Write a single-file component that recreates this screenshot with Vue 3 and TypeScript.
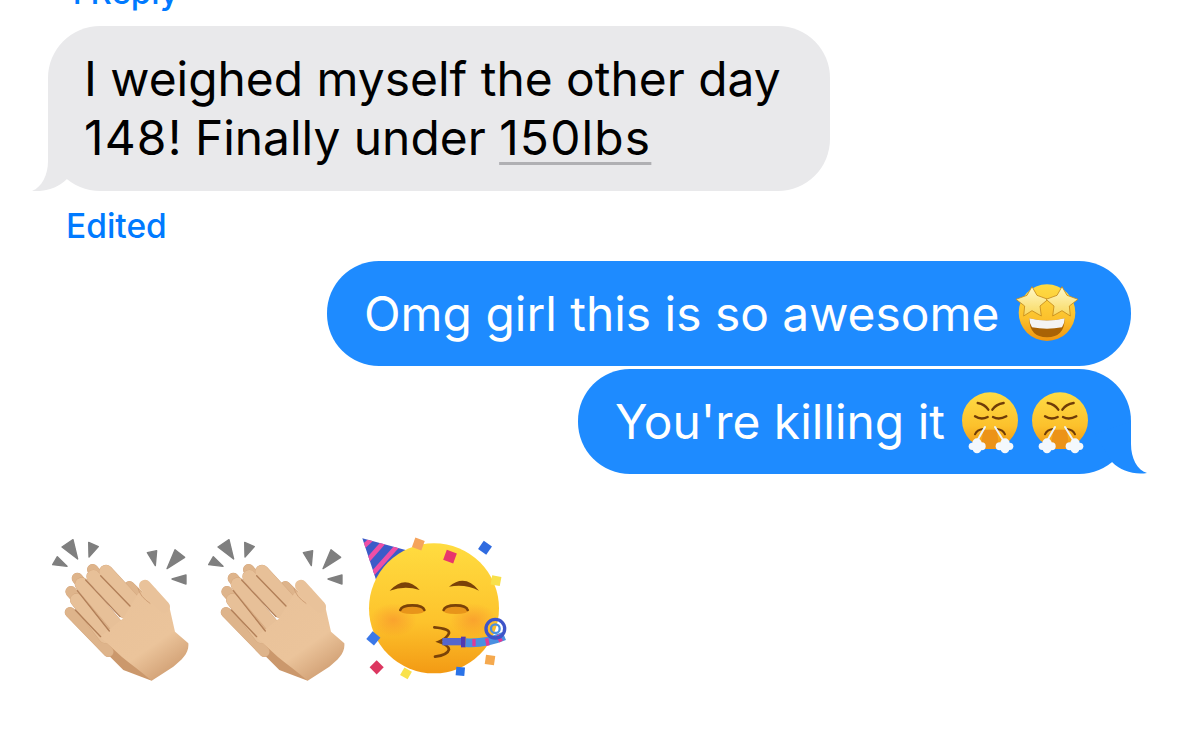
<script setup lang="ts">
interface Bit { x: number; y: number; s: number; r: number; c: string }
interface Finger { x1: number; y1: number; x2: number; y2: number; w: number }

const confetti: Bit[] = [
  { x: 190, y: 42, s: 30, r: 20, c: '#f5a45c' },
  { x: 285, y: 80, s: 32, r: 20, c: '#e8366c' },
  { x: 390, y: 53, s: 30, r: 35, c: '#2f6be0' },
  { x: 423, y: 152, s: 28, r: 10, c: '#f8e04a' },
  { x: 55, y: 325, s: 30, r: 40, c: '#3b78e8' },
  { x: 65, y: 412, s: 30, r: 45, c: '#dc3760' },
  { x: 153, y: 430, s: 26, r: 30, c: '#f9e24c' },
  { x: 316, y: 424, s: 26, r: 5, c: '#2a73e8' },
  { x: 405, y: 390, s: 28, r: 8, c: '#f5a94e' }
]
const backFingers: Finger[] = [
  { x1: 90, y1: 262, x2: 205, y2: 380, w: 30 },
  { x1: 93, y1: 200, x2: 205, y2: 325, w: 32 },
  { x1: 112, y1: 160, x2: 225, y2: 295, w: 32 },
  { x1: 158, y1: 134, x2: 245, y2: 240, w: 32 },
  { x1: 268, y1: 184, x2: 320, y2: 235, w: 30 }
]
const frontFingers: Finger[] = [
  { x1: 110, y1: 225, x2: 195, y2: 335, w: 38 },
  { x1: 125, y1: 178, x2: 225, y2: 297, w: 40 },
  { x1: 160, y1: 155, x2: 255, y2: 260, w: 40 },
  { x1: 198, y1: 140, x2: 288, y2: 238, w: 40 }
]
</script>

<template>
  <main class="page">
    <div class="reply">1 Reply</div>

    <div class="bubble grey">
      <span>I weighed myself the other day<br /><span class="num">148</span>! Finally under <span class="link num">150lbs</span></span>
      <svg class="tail tail-left" width="60" height="60" viewBox="0 0 60 60">
        <path d="M16 8V30C16 44 10 56 0 60C13 61 26 57 35 48L52 20Z" fill="#e9e9eb" />
      </svg>
    </div>
    <div class="edited">Edited</div>

    <div class="bubble blue first">
      <span>Omg girl this is so awesome</span>
      <svg class="emoji star" viewBox="0 0 210 198" width="70" height="66">
        <defs>
          <linearGradient id="face" x1="0" y1="0" x2="0" y2="1">
            <stop offset="0" stop-color="#fedc45" />
            <stop offset=".6" stop-color="#fcc12c" />
            <stop offset="1" stop-color="#f09410" />
          </linearGradient>
          <linearGradient id="starfill" x1="0" y1="0" x2="0" y2="1">
            <stop offset="0" stop-color="#fff8c8" />
            <stop offset="1" stop-color="#f8d85e" />
          </linearGradient>
        </defs>
        <circle cx="105" cy="98" r="85" fill="url(#face)" />
        <path d="M52 115Q105 128 158 115Q158 172 105 172Q52 172 52 115Z" fill="#a96205" />
        <path d="M52 115Q105 128 158 115Q158 130 150 142Q105 150 60 142Q52 130 52 115Z" fill="#f4f4f4" />
        <path d="M60 20L75 46L108 58L84 78L88 108L60 92L35 108L38 78L12 58L45 46Z" fill="url(#starfill)" stroke="#c48a1c" stroke-width="2.5" stroke-linejoin="round" />
        <path d="M150 20L135 46L102 58L126 78L122 108L150 92L175 108L172 78L198 58L165 46Z" fill="url(#starfill)" stroke="#c48a1c" stroke-width="2.5" stroke-linejoin="round" />
      </svg>
    </div>

    <div class="bubble blue second">
      <span>You're killing it</span>
      <svg v-for="n in 2" :key="n" class="emoji huff" viewBox="0 0 225 210" width="75" height="70">
        <circle cx="105" cy="100" r="84" fill="url(#face)" />
        <path d="M84 128H126L132 186H78Z" fill="#ec9318" />
        <g fill="none" stroke="#6f3c08" stroke-linecap="round">
          <path d="M68 48Q90 52 100 68" stroke-width="7" />
          <path d="M146 48Q122 52 112 68" stroke-width="7" />
          <path d="M60 88Q78 100 98 90" stroke-width="7" />
          <path d="M114 90Q132 100 154 88" stroke-width="7" />
          <path d="M60 142Q66 128 84 126" stroke-width="6" />
          <path d="M150 142Q144 128 126 126" stroke-width="6" />
        </g>
        <path d="M90 120L66 162" stroke="#eef3f8" stroke-width="6" stroke-linecap="round" />
        <path d="M120 120L146 162" stroke="#eef3f8" stroke-width="6" stroke-linecap="round" />
        <g fill="#f4f8fc">
          <circle cx="52" cy="178" r="11" /><circle cx="66" cy="168" r="14" /><circle cx="80" cy="178" r="12" /><circle cx="66" cy="186" r="13" />
          <circle cx="134" cy="178" r="12" /><circle cx="150" cy="168" r="14" /><circle cx="164" cy="178" r="11" /><circle cx="150" cy="186" r="13" />
        </g>
      </svg>
      <svg class="tail tail-right" width="60" height="60" viewBox="0 0 60 60">
        <path d="M44 8V30C44 44 50 56 60 59C47 61 34 57 25 48L8 20Z" fill="#1e8bff" />
      </svg>
    </div>

    <div class="emoji-row">
      <svg v-for="n in 2" :key="n" class="emoji clap" viewBox="0 0 480 495" width="160" height="165">
        <defs>
          <linearGradient id="palm" x1="0.2" y1="0.1" x2="0.8" y2="1">
            <stop offset="0" stop-color="#e9c29a" />
            <stop offset=".6" stop-color="#ebc49b" />
            <stop offset="1" stop-color="#cd9a6e" />
          </linearGradient>
        </defs>
        <g fill="#7f7f7f" stroke="#7f7f7f" stroke-width="4" stroke-linejoin="round">
          <path d="M38 119L81 124L52 95Z" /><path d="M66 66L99 44L113 102Z" /><path d="M146 52L175 65L147 96Z" />
          <path d="M322 83L350 77L346 122Z" /><path d="M381 131L405 74L434 97Z" /><path d="M396 162L438 150L438 177Z" />
        </g>
        <path d="M100 285L250 435L335 467L310 400L200 300Z" fill="#cb986c" />
        <g stroke-linecap="round">
          <line v-for="(f, i) in backFingers" :key="'bo' + i" :x1="f.x1" :y1="f.y1" :x2="f.x2" :y2="f.y2" :stroke-width="f.w + 2" stroke="#d3a57c" />
          <line v-for="(f, i) in backFingers" :key="'b' + i" :x1="f.x1" :y1="f.y1" :x2="f.x2" :y2="f.y2" :stroke-width="f.w" stroke="#deb48b" />
          <line v-for="(f, i) in frontFingers" :key="'fo' + i" :x1="f.x1" :y1="f.y1" :x2="f.x2" :y2="f.y2" :stroke-width="f.w + 2" stroke="#d3a57c" />
          <line v-for="(f, i) in frontFingers" :key="'f' + i" :x1="f.x1" :y1="f.y1" :x2="f.x2" :y2="f.y2" :stroke-width="f.w" stroke="#e7c098" />
        </g>
        <path d="M295 205L345 190L388 245L405 320L445 355C448 385 425 405 400 425L335 467C305 440 275 420 245 395L180 335L250 280Z" fill="url(#palm)" />
        <line x1="315" y1="182" x2="372" y2="245" stroke="#e9c29a" stroke-width="36" stroke-linecap="round" />
        <path d="M294 190Q300 215 330 235" fill="none" stroke="#cf9f76" stroke-width="3" stroke-linecap="round" />
        <g fill="none" stroke="#b27f58" stroke-width="4" stroke-linecap="round">
          <path d="M182 152L270 243" />
          <path d="M137 165L240 275" />
          <path d="M112 197L208 318" />
          <path d="M106 255L182 335" />
        </g>
      </svg>
      <svg class="emoji party" viewBox="0 0 480 465" width="160" height="155">
        <defs>
          <linearGradient id="pface" x1="0" y1="0" x2="0" y2="1">
            <stop offset="0" stop-color="#ffdc40" />
            <stop offset=".6" stop-color="#fdc32c" />
            <stop offset="1" stop-color="#f39a14" />
          </linearGradient>
          <radialGradient id="blush">
            <stop offset="0" stop-color="#f5722e" stop-opacity=".4" />
            <stop offset="1" stop-color="#f5722e" stop-opacity="0" />
          </radialGradient>
          <clipPath id="hat"><path d="M22 25L160 62L70 170Z" /></clipPath>
        </defs>
        <path d="M22 25L160 62L70 170Z" fill="#3c5bc8" />
        <g clip-path="url(#hat)" stroke="#ee4fa6" stroke-width="14" fill="none">
          <path d="M20 55L52 25" /><path d="M30 100L90 32" /><path d="M45 140L125 50" />
        </g>
        <circle cx="237" cy="235" r="195" fill="url(#pface)" />
        <ellipse cx="115" cy="270" rx="70" ry="50" fill="url(#blush)" />
        <ellipse cx="355" cy="270" rx="70" ry="50" fill="url(#blush)" />
        <g fill="#7a4208">
          <path d="M104 182Q150 132 194 180Q150 166 104 182Z" />
          <path d="M282 170Q330 130 372 182Q330 160 282 170Z" />
        </g>
        <path d="M134 240Q134 224 172 224Q210 224 210 240Q210 252 172 252Q134 252 134 240Z" fill="#e8951a" />
        <path d="M264 240Q264 224 302 224Q340 224 340 240Q340 252 302 252Q264 252 264 240Z" fill="#e8951a" />
        <g fill="none" stroke="#7a4208" stroke-linecap="round">
          <path d="M136 240Q140 226 172 226Q204 226 208 240" stroke-width="8" />
          <path d="M266 240Q270 226 302 226Q334 226 338 240" stroke-width="8" />
          <path d="M238 292Q285 296 282 310Q276 325 252 335Q280 345 282 358Q278 375 240 380" stroke-width="8" />
        </g>
        <path d="M262 335H325" stroke="#5566cc" stroke-width="22" />
        <path d="M325 320V352" stroke="#5138b0" stroke-width="14" />
        <path d="M332 338Q390 342 448 318" fill="none" stroke="#4a8fe0" stroke-width="26" />
        <path d="M352 338L362 338M392 337L402 335M428 328L438 322" stroke="#e03a96" stroke-width="22" />
        <circle cx="421" cy="296" r="28" fill="none" stroke="#3e54c8" stroke-width="10" />
        <circle cx="421" cy="296" r="13" fill="none" stroke="#4a8fe0" stroke-width="7" />
        <rect v-for="c in confetti" :key="c.x" :x="c.x - c.s / 2" :y="c.y - c.s / 2" :width="c.s" :height="c.s" :fill="c.c" :transform="`rotate(${c.r} ${c.x} ${c.y})`" />
      </svg>
    </div>
  </main>
</template>

<style scoped>
.page {
  width: 1179px;
  height: 730px;
  overflow: hidden;
  display: flex;
  flex-direction: column;
  font-family: Inter, "Liberation Sans", sans-serif;
  background: #fff;
}
.reply {
  color: #007aff;
  font-size: 33px;
  font-weight: 500;
  line-height: 36px;
  margin: -26px 0 16px 68px;
}
.bubble {
  position: relative;
  display: flex;
  align-items: center;
  box-sizing: border-box;
  border-radius: 52px;
  font-size: 47.9px;
  line-height: 59px;
  padding-top: 24px;
  padding-bottom: 22px;
}
.grey {
  align-self: flex-start;
  margin-left: 48px;
  width: 782px;
  background: #e9e9eb;
  color: #000;
  padding-left: 36px;
  padding-bottom: 23px;
}
.num {
  letter-spacing: 1.2px;
}
.link {
  text-decoration: underline;
  text-decoration-color: #b0b0b3;
  text-decoration-thickness: 3px;
  text-underline-offset: 7px;
}
.edited {
  color: #007aff;
  font-size: 33.5px;
  font-weight: 500;
  line-height: 36px;
  margin: 17px 0 17px 66px;
}
.blue {
  align-self: flex-end;
  margin-right: 48px;
  background: #1e8bff;
  color: #fff;
  padding-left: 37px;
}
.first {
  width: 804px;
  justify-content: space-between;
  padding-right: 49px;
}
.second {
  margin-top: 3px;
  width: 553px;
  padding-right: 31px;
  justify-content: flex-end;
}
.second > span {
  margin-right: auto;
}
.emoji {
  filter: blur(0.4px);
}
.star {
  margin: -5px 0 -2px;
}
.huff {
  margin: -7px 0 -5px;
}
.huff + .huff {
  margin-left: -5px;
}
.tail {
  position: absolute;
  bottom: 0;
}
.tail-left {
  left: -16px;
}
.tail-right {
  right: -16px;
}
.emoji-row {
  display: flex;
  margin: 51px 0 0 40px;
}
.clap {
  margin-right: -4px;
}
.party {
  margin: 5px 0 0 3px;
}
</style>
